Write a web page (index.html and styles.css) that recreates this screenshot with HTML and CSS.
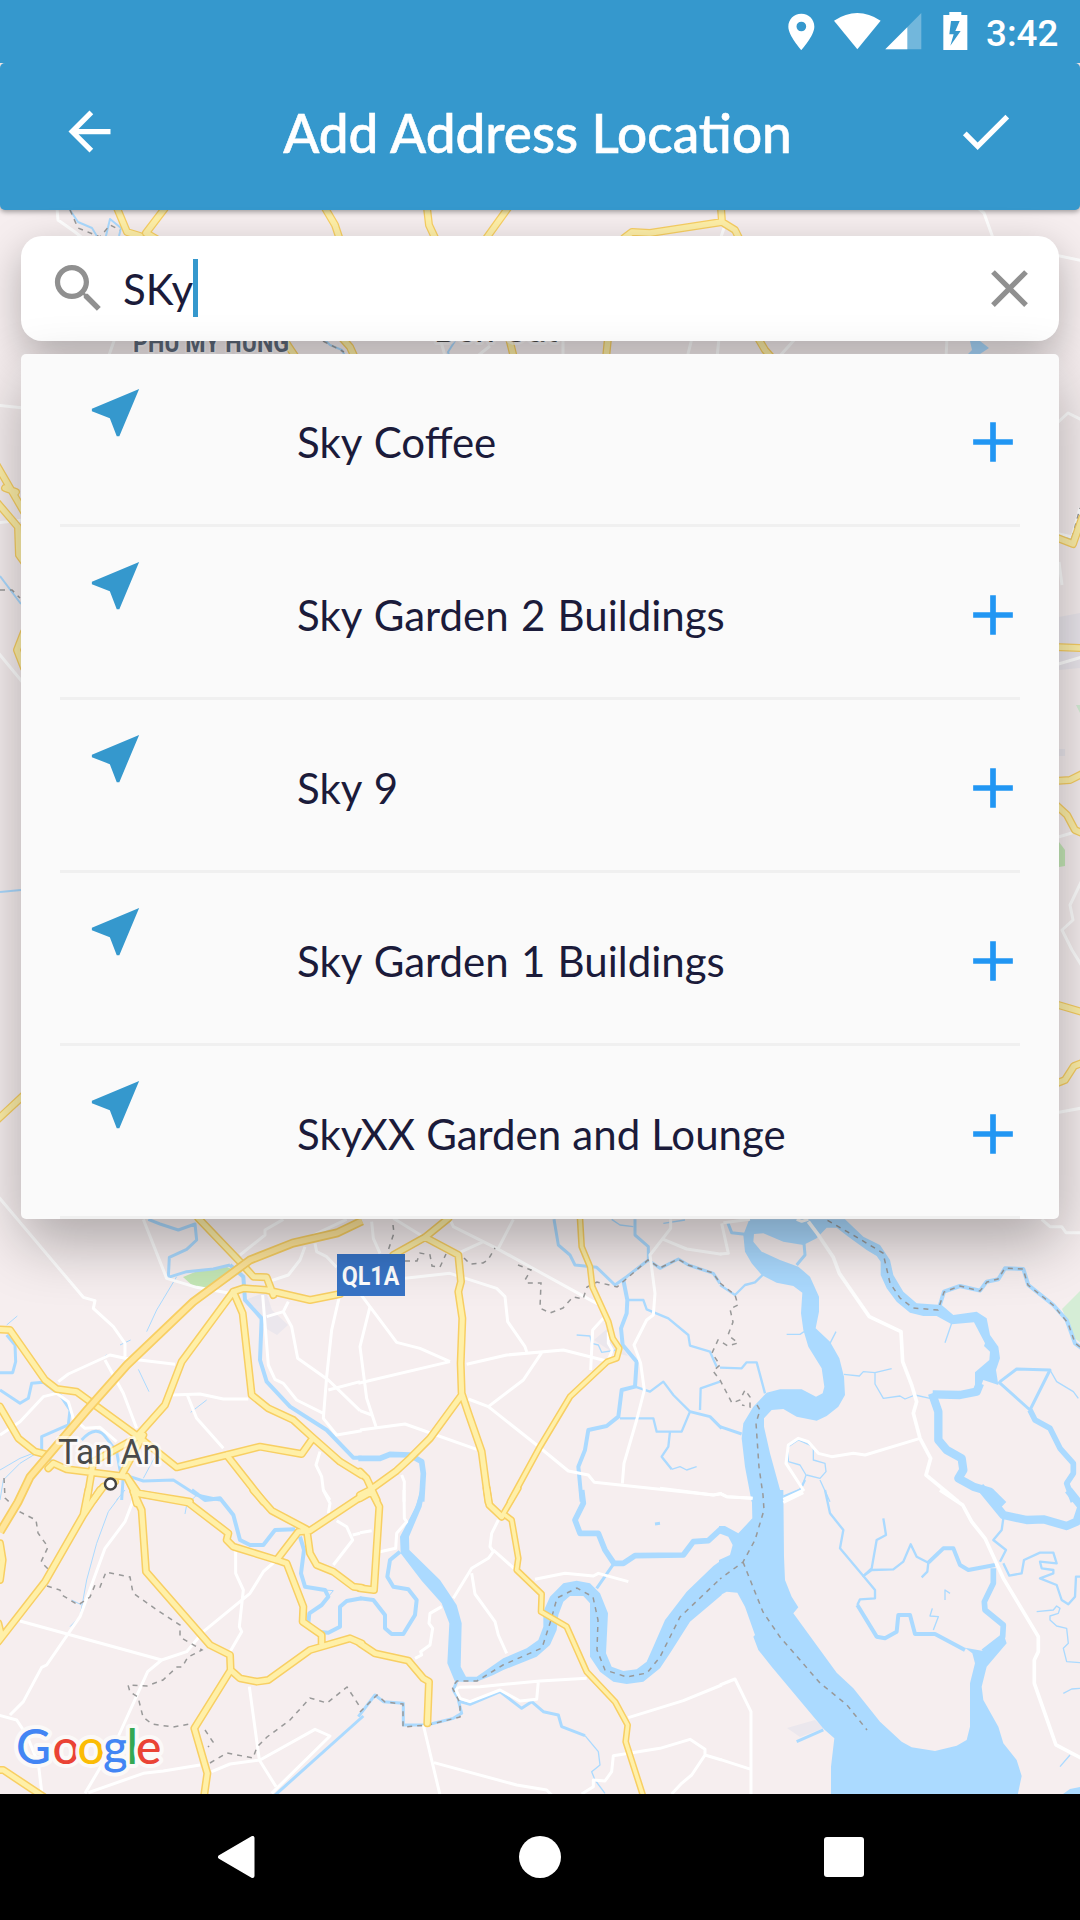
FILE: index.html
```html
<!DOCTYPE html>
<html lang="en">
<head>
<meta charset="utf-8">
<title>Add Address Location</title>
<link rel="stylesheet" href="styles.css">
</head>
<body>
<div class="screen">
  <svg class="map" viewBox="0 0 1080 1794" width="1080" height="1794" aria-label="Map">
    <defs>
      <g id="arterials">
        <g class="edge-roads">
          <path d="M117 208 127 232 140 236M165 208 146 233 158 240M325 208 335 225 340 240M427 208 429 225 436 240M508 208 485 240M721 208 722 222 650 233 632 232 624 238M722 222 735 230 740 240"/>
          <path d="M283 338 295 356M342 338 350 347 355 358M509 338 514 358M608 338 606 358M758 338 765 350 772 358"/>
          <path d="M-5 462 24 512M5 488 16 492M-5 500 18 527 19 555 24 562M24 632 17 650 24 668M-5 1122 24 1095"/>
          <path d="M1055 537 1073 544 1082 518M1055 647 1082 648M1055 781 1070 780 1082 774M1055 804 1067 815 1075 830 1082 833M1055 1004 1082 1012M1055 1084 1065 1080 1074 1066 1082 1063"/>
        </g>
        <g class="tile" transform="translate(0 1180) scale(.33333)">
          <path d="M595 115 720 245 760 290 800 292 820 345M700 335 730 325 800 330 930 360 1020 342M700 335 545 545 495 675 415 765M700 335 728 400 755 645 805 685 880 720 935 770 1020 845 1085 885M-5 448 30 450 135 600 170 627 230 635 415 770 530 862 680 825 780 800 905 822 938 775M680 825 790 965"/>
          <path d="M0 680 55 775 105 815 145 825M145 865 160 850 200 868 380 890 415 940 570 965M415 770 280 845 260 965M430 765 365 885M280 960 310 920 345 905M380 890 400 930 410 970"/>
        </g>
        <g class="tile" transform="translate(360 1180) scale(.33333)">
          <path d="M265 115 195 172 100 225M195 172 295 225 303 305 295 335 307 415 302 550 305 640 325 700 365 815 385 965M305 645 210 775 150 835 110 872 30 930 0 945M0 875 20 895 50 960"/>
          <path class="narrow" d="M660 115 665 200 690 260 697 320 745 425 758 475 778 505 770 535 742 545 630 650 540 800 450 965"/>
        </g>
        <g class="tile" transform="translate(0 1490) scale(.33333)">
          <path d="M410 10 565 38 685 130 680 150 700 170 830 210 860 220 910 350 908 395 965 435 965 460M830 210 895 125 930 122 1080 22M760 0 815 62 920 118 930 190 950 225 1000 245 1060 290 1085 293M400 5 425 60 438 245 630 465 690 495 692 545M692 540 720 565 770 575 805 570 930 480 1050 445 1085 460M692 540 583 715 622 850 612 920"/>
          <path d="M-5 455 135 275 250 75 265 0M250 75 300 0M-5 840 10 840 130 920M0 160 8 210 0 270M-5 400 5 440"/>
        </g>
        <g class="tile" transform="translate(360 1490) scale(.33333)">
          <path d="M380-5 388 45 425 80M0 25 35 5 58 50 42 300 0 295M0 460 45 490 145 512 190 565 207 575 202 700"/>
          <path class="narrow" d="M475-5 425 80M435 75 455 90 475 205 470 240 545 312 543 365 620 410 680 545 765 635 803 705 797 755 850 920"/>
        </g>
      </g>
      <g id="highway">
        <path d="M362 1221 337 1233 293 1243 250 1260 193 1302 127 1365 87 1410 30 1477 18 1502 0 1532" />
      </g>
    </defs>
    <rect class="land" width="1080" height="1794"/>

    <path class="park" d="M183 1277 200 1270 227 1267 238 1272 230 1280 213 1291 193 1286z"/>
    <path class="reserve" d="M1062 1309 1081 1290V1343L1073 1337 1068 1323z"/>
    <path class="park" d="M1059 842 1065 850V866L1059 867z"/>
    <path class="reserve" d="M1076 705h4v8z"/>
    <path class="town" d="M1059 617 1080 613V668L1059 670zM1059 749h6v7h-6z"/>
    <path class="town" d="M245 1300 266 1292 272 1310 288 1325 277 1335 265 1328zM594 1340 608 1328 628 1356 612 1352zM787 1728 815 1720 824 1728 800 1737z"/>

    <g class="water">
      <path class="w3" d="M70 210 78 222 92 228 98 238M105 240 110 219 121 228 119 236M323 338 330 345 342 350 346 358M450 358 448 352 455 341M0 576 21 604M0 892 21 890M1059 536 1074 539"/>
      <path class="lake" d="M970 341H980L989 348 980 354H968L972 350z"/>
      <g transform="translate(0 1180) scale(.33333)">
        <path class="w12" d="M690 255 730 290 735 360 785 415 780 540 800 605 870 680 980 750 1060 833 1085 833"/>
        <path class="w9" d="M445 118 480 132 535 150 585 132 590 180 560 208 508 232 505 292 560 275 640 267 690 255M-5 578 38 578 47 545 45 495 20 465M0 630 60 670 85 655 95 610 130 607 180 645 210 690 205 735 125 770 125 815 165 855M245 780Q290 730 320 775L350 815 360 870 390 890 430 903 520 900 590 945 660 960M370 885 365 960"/>
        <path class="w4" d="M530 290 470 390 440 455M20 435 52 408M360 495 392 480M300 540 320 525M415 568 447 635M572 697 620 660M125 810 60 835 0 870M0 960 10 900 60 850 125 810M430 895 465 830"/>
      </g>
      <g transform="translate(360 1180) scale(.33333)">
        <path class="w17" d="M-5 835 60 835 90 823 150 825 185 845 190 880 185 965"/>
        <path class="w9" d="M582 118 595 195 630 225 645 255 710 262 765 315 800 290 865 240 865 200 825 165 825 118M865 240 900 265 955 237 985 255 1060 280 1080 310M990 695 1050 710 1085 745"/>
        <path class="w12" d="M790 300 802 360 800 400 783 445 788 495 830 545 825 620 785 630 775 710 740 738 685 750 675 810 655 860 665 965"/>
        <path class="w7" d="M800 360 850 360 860 388 925 415 985 465 990 497 1050 515 1070 560M825 620 870 635 910 605 940 645 990 695M1020 690 1022 625 1080 605M990 695 965 755 890 755 880 715 780 715M930 755 925 800 905 830 935 868"/>
        <path class="w5" d="M935 868 960 860 980 870 1010 860M650 465 690 468 695 490 715 495 725 517 770 510M755 118 780 135 820 140M910 130 975 120"/>
      </g>
      <g transform="translate(720 1180) scale(.33333)">
        <path class="lake" d="M88 118 70 165 75 215 95 250 125 285 170 308 220 318 247 338 243 400 250 450 265 500 305 565 313 620 308 640 288 650 245 628 180 628 140 638 100 680 70 730 65 775 75 860 95 965H190L150 820 132 740V715L155 690 190 687 230 710 290 722 320 708 355 680 375 645 372 590 358 535 330 485 287 445 297 395V350L270 290 235 260 180 240 125 215 100 185 102 162 130 160 190 185 250 195 290 175 320 143H350L385 170 440 210 470 228 482 245V285L500 325 530 365 570 398 610 408H650L695 433 762 427 795 490 792 498 810 515 808 540 765 577V620L778 630 790 600 835 615 828 570 840 535 835 500 810 465 800 415 770 395 700 405 665 375 590 370 550 335 520 285 510 240 480 195 430 170 375 118z"/>
        <path class="w26" d="M780 610 770 635 720 645 638 643"/>
        <path class="w26" d="M636 640 655 695 655 780 680 810 725 835 730 870 715 895 760 920 810 935 850 975"/>
        <path class="w12" d="M655 390 672 335 720 318 780 332 800 305 835 298 855 265 910 267 925 315 1000 375 1040 420 1065 490 1085 505"/>
        <path class="w9" d="M840 605 890 567 990 570 930 690 835 605M22 125 35 158 75 163M252 190 255 225 230 255M0 740 65 762"/>
        <path class="w17" d="M930 690 945 720 990 745 1020 805 1060 850V880L1040 910 1060 965"/>
        <path class="w5" d="M990 570 1010 605 1060 635 1075 655M695 430 675 488M372 583 418 588 430 575 465 578 515 566M465 578V612L490 655 540 648 555 657 585 645 630 655M330 490 348 455M200 463H240L252 455M205 845 240 855 258 885 245 925 190 955M205 845V800L235 780 280 800V840L315 850 318 875 300 895 260 885M300 900 330 965"/>
        <path class="w7" d="M130 283 105 307 75 315 45 345 0 315M0 563 65 565 80 547H110L135 640M255 900 240 930 190 955"/>
      </g>
      <g transform="translate(0 1490) scale(.33333)">
        <path class="w12" d="M575 0 615 30 660 25 700 75 720 150 750 165H790L825 120 885 118M900 140 912 180 903 250 915 290 975 300 985 320 965 345 928 370 925 400 950 425 985 428 1020 410V350L1040 333 1085 325"/>
        <path class="w4" d="M355 25 325 65 290 160 260 270 240 380 210 410M595 10 560 45 555 72M975 300 1000 302 985 320M375 0 350 30M215 330 245 345"/>
        <path class="w9" d="M820 920 1090 678"/>
      </g>
      <g transform="translate(360 1490) scale(.33333)">
        <path class="w12" d="M188-5 175 45 135 135"/>
        <path class="lake" d="M183 0 165 55 120 140 122 190 185 272 245 340 268 400 262 520 285 575H350L400 555 430 540 530 500 570 465 590 420 595 375 610 335 630 318H670L690 340V500L720 545 760 575 800 582 850 575 900 535 930 490 990 395 1085 315V210L1060 228 980 305 915 390 880 470 860 515 830 538 790 543 755 530 738 490 744 370 720 310 690 280 650 272 610 280 570 320 550 365V410L535 450 500 475 430 505 350 560H318L302 530 305 400 290 345 240 270 148 180 147 140 185 50 195 0z"/>
        <path class="w12" d="M120 185 90 210 82 260 100 290 145 298 170 330 165 375 130 432H95L75 415V375L40 330 0 325"/>
        <path class="w17" d="M665 0 670 40 645 90 660 130H715L735 180 762 220H790L825 197 970 195 1000 155 1045 152 1085 115"/>
        <path class="w9" d="M762 220 710 295M290 575 280 600 300 635 330 643 420 605 485 655 515 635 550 665 595 675 605 710 675 737M-5 680 45 615 70 635 130 640V705H200L280 685 305 670 295 630M885 102 900 100"/>
        <path class="w5" d="M675 737 715 785 720 825 695 845 705 870 735 910"/>
      </g>
      <g transform="translate(720 1490) scale(.33333)">
        <path class="lake" d="M95 0 97 85 55 130 15 108H-3V130L25 140 38 165 30 195-3 210V317L20 305 52 308 75 350 105 435 100 440 115 480 155 530 312 718 343 745 333 830V915H893L905 858 890 810 850 760 835 710 790 630 785 590 800 530 860 460 850 430 790 483 735 473 757 490 765 520 750 580V710L740 750 710 767 645 783 575 772 545 755 480 695 400 595 350 548 220 370 235 352 215 320 195 270 192 200 190 0z"/>
        <path class="w17" d="M790 485 848 440 850 405 795 360 793 335 820 280 820 235"/>
        <path class="w12" d="M825 225 745 240 720 225 700 175H670L625 218M412 345 470 440 495 445 530 425 535 375H570L585 432H645L735 480"/>
        <path class="w8" d="M625 218 590 200 572 163 550 215 520 238 455 240 430 258 465 300V325L420 328 412 345"/>
        <path class="w8" d="M315 0 330 70 370 120 360 175 430 258 455 235 470 150 498 135 490 85M625 218 622 245 605 262M850 85 845 120 820 150 858 180 840 215M190 20 250-5"/>
        <path class="w26" d="M780-10 850 75 920 90 970 88 1040 108 1070 95 1085 50 1045 0"/>
        <path class="w8" d="M850 220 868 257 905 250 912 210 960 188H1000L1010 220 960 215 965 235 1000 240V250L960 265 1010 285 1025 330 1045 343 1065 320 1068 260H1085"/>
        <path class="w5" d="M950 365 1000 360 1010 348 1020 355 1015 370 990 378V390L1010 408 1040 415 1045 460 1030 475 1040 515 1080 518M1030 610 1055 597 1080 595M1020 830 1050 795M640 420 655 380 630 378 637 355M675 330V300L690 310"/>
        <path class="w9" d="M230 755 310 720"/>
        <path class="lake" d="M1025 915 1050 897 1085 890V915z"/>
      </g>
    </g>

    <g class="streets">
      <g class="edge-roads">
        <path d="M57 208 58 220 75 232 85 240M720 240 724 228M978 208 984 213 993 238M1055 255 1084 261M115 338 108 358M440 338 445 356M475 358 490 346M563 338V358M692 338 687 358M719 338 717 358M796 338 778 358M947 338 946 358M-4 405 24 408M-4 523 24 520M-4 650 24 684M1055 425 1068 413 1082 420M1082 880 1070 905 1073 920 1062 930 1072 950 1082 966M1055 838 1075 832M1055 1113 1082 1108M1059 562 1062 585M1055 533 1072 537 1080 508M1055 665 1082 657"/>
      </g>
      <g transform="translate(0 1180) scale(.33333)">
        <path d="M-5 50 250 352 285 362 280 385 340 440 375 490V530M430 118 500 295 590 322 690 340M175 605 205 582 330 525 375 535 525 553M315 540 370 640 410 745M0 765 60 725 130 650 170 640 205 665 220 715 255 745 300 742 350 785M515 645 600 642 670 657H745M562 645 590 715 670 805M850 118 795 150V165L720 225M1040 118 940 165M915 200 900 240 865 285 805 305M945 190 950 215 980 230 1010 262M788 345 805 555 825 598 850 610 890 660 970 700M865 365 850 395 800 410M850 395 875 440 893 535 985 600 1080 692M1018 350 995 450 980 590 970 715 1010 765 1085 752M985 630 1080 605M960 815 948 855 965 890 970 930 990 960"/>
      </g>
      <g transform="translate(360 1180) scale(.33333)">
        <path d="M35 125 40 175 60 220M100 115 190 170M270 118 280 140 370 185 410 205 700 365 730 380M370 185 300 217M415 205 460 118M135 295 270 280 410 325 435 350 443 425 495 500 500 515M0 340 110 487 180 505 270 545M-5 610 270 545M30 380 0 500 20 655 48 740M0 750 135 732 350 808M0 692 35 705M320 553 440 525 610 510 740 543M545 518 490 600 385 680 325 657M385 680 530 795 625 873 685 885 703 907 1060 945 1085 940M730 415 698 450 692 570M745 455V490L757 510 745 540M932 118V145L870 225 885 340 880 405 860 420 822 495 842 550 853 630 830 720 792 850 787 910M910 178 980 207 1085 223M125 885 133 905 132 965"/>
      </g>
      <g transform="translate(720 1180) scale(.33333)">
        <path class="major" d="M265 125 293 162 340 232 358 280 448 410 543 455 548 545 575 615 590 665 580 700 600 775 632 835 618 885 715 965"/>
        <path d="M600 775 435 825 400 820 335 830 295 820 265 785 235 775 205 795 198 850 250 930 190 958M5 130 25 220 0 222M0 940 20 950 98 955M965 118 990 140H1025L1038 158H1080M10 128 90 118M230 118 245 124 265 118"/>
      </g>
      <g transform="translate(0 1490) scale(.33333)">
        <path d="M400 30 375 95 315 175 240 380 140 525 125 532 70 635 30 675M-5 675 50 690 80 735 115 820 125 905M60 393 485 510 560 485 610 425 750 310 790 245 830 210M485 510 443 545 350 750 255 910M265 908 430 850 490 843 600 825M635 845 690 822 780 810 945 718 990 738 815 910M748 590 778 810 828 890M707 180V250L730 300 718 410 725 425 690 485M970 0 990 40 985 70M1010 92 1040 110 1058 150 1000 225M1058 135 1080 130"/>
      </g>
      <g transform="translate(360 1490) scale(.33333)">
        <path d="M132 0 133 85 140 95 110 130 107 175 60 185M0 128 35 122M415 90 395 130 390 170 400 185 385 205 335 235 280 325M400 180 465 238M335 250 345 312 405 395 415 435 440 490M245 350 210 370 207 400 218 415 210 465 182 485 185 495 165 505M525 268 615 250 700 258 715 250 805 275M295 592 360 590 540 573 680 565M535 575 530 628 480 633 420 600 330 635 300 625 288 600 295 592M190 705 240 915M222 818 470 885 560 900 575 915M805 683 970 632 1085 585M665 912 700 890V870L735 873 755 845 760 797 900 775 990 748 1035 778V795L995 855 965 880 935 912M1035 795 1085 810M900-5 1060 15 1080 12"/>
      </g>
      <g transform="translate(720 1490) scale(.33333)">
        <path class="major" d="M660 0 728 45 755 95 795 145 850 265 955 440V485L943 510V580L1008 765 1085 805"/>
        <path d="M0 585 45 567 93 665V915M0 808 93 838M0 10 20 20 97 25M190 37 250 8"/>
      </g>
    </g>

    <g class="borders">
      <path d="M70 210 78 228 100 237 110 225 120 230M323 341 344 352M0 590 12 590 20 598M1072 538 1080 508"/>
      <path d="M393 1225 394 1233 388 1251M405 1261 417 1261 420 1253 430 1255 432 1266 440 1267 446 1254M464 1258 470 1264 483 1263 488 1260 495 1248M518 1265 531 1270 525 1280 527 1283 541 1283 540 1308 550 1313 563 1308 573 1297 583 1299 587 1287 597 1282 617 1287 648 1260 660 1268 678 1259 688 1265 713 1273 720 1283M1080 1347 1075 1343 1068 1323 1053 1305 1028 1285 1023 1269 1005 1268 998 1279 987 1282 980 1291 960 1286 944 1292 938 1310 913 1308 900 1298 890 1283 883 1253 853 1235 825 1219"/>
      <path d="M720 1283 735 1295 738 1305 730 1309 733 1322 728 1335 738 1343 728 1346 718 1340 712 1353 720 1365 713 1371 720 1380 732 1403 740 1400 745 1390 750 1397V1407L742 1405M757 1405 760 1410 756 1423 759 1467 763 1495 764 1510 755 1540 743 1562 720 1579M743 1562 763 1612 780 1637 820 1683 847 1705 867 1730"/>
      <path d="M4 1478 5 1498 20 1512 36 1520 38 1533 48 1547 41 1562 48 1569M47 1586 60 1590 62 1595 78 1605 90 1597 95 1585 100 1587 106 1572 130 1577 133 1593 157 1610 180 1625V1637L202 1650 188 1657 182 1667H177L163 1680 147 1686 128 1685 130 1692 138 1697 143 1717 152 1724 173 1727 190 1724M205 1730 213 1742 208 1747M210 1763 227 1753 253 1758 257 1747 267 1737 290 1720 310 1698 327 1703 347 1687 360 1707"/>
      <path d="M360 1712 377 1695 385 1702 403 1704V1727L428 1725 460 1717V1703L452 1687 457 1681H477L503 1665 542 1648 551 1620 557 1598 577 1588 593 1597 598 1620 597 1650 605 1670 627 1677 647 1673 660 1657 680 1617 720 1579"/>
    </g>

    <use href="#arterials" class="road-case"/>
    <use href="#arterials" class="road-fill"/>
    <use href="#highway" class="highway-case"/>
    <use href="#highway" class="highway-fill"/>

    <rect class="shield" x="337" y="1254" width="68" height="42"/>
    <text class="shield-label" x="370.500" y="1285" text-anchor="middle" textLength="57.500" lengthAdjust="spacingAndGlyphs">QL1A</text>
    <circle class="town-dot" cx="110.500" cy="1484" r="5.500"/>
    <text class="place" x="58" y="1463.500" textLength="103" lengthAdjust="spacingAndGlyphs">Tan An</text>
    <text class="place" x="434" y="342" textLength="124" lengthAdjust="spacingAndGlyphs">Ben Cat</text>
    <text class="district" x="133" y="352" textLength="156" lengthAdjust="spacingAndGlyphs">PHU MY HUNG</text>
    <text class="google" y="1763.500"><tspan class="g-blue" x="16">G</tspan><tspan class="g-red" x="52.500">o</tspan><tspan class="g-yellow" x="77.500">o</tspan><tspan class="g-blue" x="103">g</tspan><tspan class="g-green" x="126.500">l</tspan><tspan class="g-red" x="136">e</tspan></text>
  </svg>

  <div class="status-bar">
    <svg class="status-icons" viewBox="0 0 598 189" width="199.330" height="63" aria-hidden="true">
      <path fill-rule="evenodd" d="M43 41C20 41 4 58 4 80C4 107 43 150 43 150S82 107 82 80C82 58 66 41 43 41ZM43 65A14.500 14.500 0 1 1 43 94 14.500 14.500 0 1 1 43 65Z"/>
      <path d="M141 62Q211 16 281 62L211 148Z"/>
      <path fill-opacity=".3" d="M403 39V148H295Z"/>
      <path d="M361 82V148H295Z"/>
      <path fill-rule="evenodd" d="M469 45H487V36H523V45H541V150H469ZM492 63L487 103H500L490 137 521 93H505L518 63Z"/>
    </svg>
    <span class="clock">3:42</span>
  </div>

  <header class="app-bar">
    <svg class="icon" viewBox="0 0 24 24" aria-label="Back"><path d="M20 11H7.830l5.590-5.590L12 4l-8 8 8 8 1.410-1.410L7.830 13H20v-2z"/></svg>
    <h1>Add Address Location</h1>
    <svg class="icon" viewBox="0 0 24 24" aria-label="Confirm"><path d="M9 16.170L4.830 12l-1.420 1.410L9 19 21 7l-1.410-1.410z"/></svg>
  </header>

  <main>
    <div class="search">
      <svg class="icon" viewBox="0 0 24 24" aria-hidden="true"><path d="M15.500 14h-.79l-.28-.27C15.410 12.590 16 11.110 16 9.500 16 5.910 13.090 3 9.500 3S3 5.910 3 9.500 5.910 16 9.500 16c1.610 0 3.090-.59 4.230-1.570l.27.28v.79l5 4.990L20.490 19l-4.990-5zm-6 0C7.010 14 5 11.990 5 9.500S7.010 5 9.500 5 14 7.010 14 9.500 11.990 14 9.500 14z"/></svg>
      <span class="query">SKy</span><span class="caret"></span>
      <svg class="icon clear" viewBox="0 0 24 24" aria-label="Clear"><path d="M19 6.410L17.590 5 12 10.590 6.410 5 5 6.410 10.590 12 5 17.590 6.410 19 12 13.410 17.590 19 19 17.590 13.410 12z"/></svg>
    </div>
    <ul class="results">
      <li><svg class="near" viewBox="0 0 24 24"><path d="M21 3L3 10.530v.98l6.840 2.650L12.480 21h.98L21 3z"/></svg><span>Sky Coffee</span><svg class="add" viewBox="0 0 24 24"><path d="M19 13h-6v6h-2v-6H5v-2h6V5h2v6h6v2z"/></svg></li>
      <li><svg class="near" viewBox="0 0 24 24"><path d="M21 3L3 10.530v.98l6.840 2.650L12.480 21h.98L21 3z"/></svg><span>Sky Garden 2 Buildings</span><svg class="add" viewBox="0 0 24 24"><path d="M19 13h-6v6h-2v-6H5v-2h6V5h2v6h6v2z"/></svg></li>
      <li><svg class="near" viewBox="0 0 24 24"><path d="M21 3L3 10.530v.98l6.840 2.650L12.480 21h.98L21 3z"/></svg><span>Sky 9</span><svg class="add" viewBox="0 0 24 24"><path d="M19 13h-6v6h-2v-6H5v-2h6V5h2v6h6v2z"/></svg></li>
      <li><svg class="near" viewBox="0 0 24 24"><path d="M21 3L3 10.530v.98l6.840 2.650L12.480 21h.98L21 3z"/></svg><span>Sky Garden 1 Buildings</span><svg class="add" viewBox="0 0 24 24"><path d="M19 13h-6v6h-2v-6H5v-2h6V5h2v6h6v2z"/></svg></li>
      <li><svg class="near" viewBox="0 0 24 24"><path d="M21 3L3 10.530v.98l6.840 2.650L12.480 21h.98L21 3z"/></svg><span class="tight">SkyXX Garden and Lounge</span><svg class="add" viewBox="0 0 24 24"><path d="M19 13h-6v6h-2v-6H5v-2h6V5h2v6h6v2z"/></svg></li>
    </ul>
  </main>

  <nav class="nav-bar">
    <svg viewBox="0 0 42 42"><path d="M37.500 2V40L5 21Z" stroke="#fff" stroke-width="4" stroke-linejoin="round"/></svg>
    <svg viewBox="0 0 42 42"><circle cx="21" cy="21" r="21"/></svg>
    <svg viewBox="0 0 42 42"><rect x="1" y="1" width="40" height="40" rx="3"/></svg>
  </nav>
</div>
</body>
</html>
```
FILE: styles.css
```css
* { box-sizing: border-box; }
body { margin: 0; background: #000; font-family: Lato, "Liberation Sans", sans-serif; }
.screen { position: relative; width: 1080px; height: 1920px; overflow: hidden; display: flex; flex-direction: column; }

/* Map underlay */
.map { position: absolute; top: 0; left: 0; display: block; }
.map path { fill: none; }
.map .land { fill: #f6eeef; }
.map .park { fill: #c5e8b7; }
.map .reserve { fill: #d5edd6; }
.map .town { fill: #ebe7ed; }
.water path { stroke: #abdaff; stroke-linejoin: round; }
.water .lake { fill: #abdaff; stroke: none; }
.w3 { stroke-width: 2px; }
.w4 { stroke-width: 3px; }
.w5 { stroke-width: 4px; }
.w7 { stroke-width: 7px; }
.w8 { stroke-width: 7px; }
.w9 { stroke-width: 9px; }
.w12 { stroke-width: 12px; }
.w17 { stroke-width: 17px; }
.w26 { stroke-width: 25px; }
.streets path { stroke: #fff; stroke-width: 9px; stroke-linejoin: round; }
.streets .major { stroke-width: 11px; }
.streets .edge-roads path { stroke-width: 3px; }
.borders path { stroke: #999; stroke-width: 1.5px; stroke-dasharray: 5 5; }
.road-case { --wide: 24px; --slim: 20px; --edge: 8px; stroke: #f8cf63; }
.road-fill { --wide: 15px; --slim: 11px; --edge: 5.500px; stroke: #fff0a8; }
#arterials path { stroke-width: var(--wide); stroke-linejoin: round; stroke-linecap: round; }
#arterials .narrow { stroke-width: var(--slim); }
#arterials .edge-roads path { stroke-width: var(--edge); }
.highway-case { stroke: #f8cf63; stroke-width: 9px; }
.highway-fill { stroke: #ffe69b; stroke-width: 5.500px; }
.shield { fill: #3874c6; }
.shield-label { font: 700 25px Roboto, sans-serif; fill: #fff; }
.town-dot { fill: #fff; stroke: #444; stroke-width: 2.500px; }
.place { font: 400 35px Roboto, sans-serif; fill: #4a4a4a; stroke: rgba(255, 255, 255, .65); stroke-width: 6px; paint-order: stroke; stroke-linejoin: round; }
.district { font: 700 27px Roboto, sans-serif; fill: #5f6b7c; stroke: rgba(255, 255, 255, .5); stroke-width: 4px; paint-order: stroke; }
.google { font: 500 48px Lato, sans-serif; stroke: rgba(252, 250, 249, .95); stroke-width: 8px; paint-order: stroke; stroke-linejoin: round; }
.g-blue { fill: #4285f4; }
.g-red { fill: #ea4335; }
.g-yellow { fill: #fbbc05; }
.g-green { fill: #34a853; }

/* System status */
.status-bar { position: relative; z-index: 1; height: 63px; flex: none; background: #3598cd; display: flex; justify-content: flex-end; align-items: center; padding-right: 21px; }
.status-icons { fill: #fff; }
.clock { font: 500 36.750px/52px Roboto, sans-serif; color: #fff; width: 73px; margin-top: 4px; }

.app-bar { position: relative; height: 147px; flex: none; background: #3598cd; border-radius: 5px; box-shadow: 0 2px 5px rgba(0, 0, 0, .35); display: flex; align-items: center; justify-content: space-between; padding: 0 63px 10px 58px; }
.app-bar h1 { margin: 0; color: #fff; font-size: 53.100px; font-weight: 500; line-height: 64px; padding-top: 2px; -webkit-text-stroke: .6px #fff; }
.icon { width: 63px; height: 63px; fill: #fff; flex: none; }

main { position: relative; flex: 1; padding: 26px 21px 0; }
.search { height: 105px; background: #fff; border-radius: 21px; box-shadow: 0 14px 40px rgba(0, 0, 0, .28); display: flex; align-items: center; padding: 0 18px 0 26px; color: #1b1b3a; }
.search .icon { fill: #909090; }
.query { font-size: 42px; line-height: 52px; margin-left: 13px; margin-top: 1px; }
.caret { width: 5px; height: 58px; margin-bottom: 1px; background: #3598cd; }
.clear { margin-left: auto; }
.results { position: relative; list-style: none; margin: 13px 0 0; padding: 0 39px; background: #fafafa; border-radius: 5px; box-shadow: 0 24px 60px rgba(0, 0, 0, .3); }
.results li { height: 173px; border-bottom: 3px solid #f0f0f0; display: grid; grid-template-columns: 237px 1fr 68px; align-items: center; color: #1b1b3a; font-size: 42px; line-height: 52px; padding-top: 6px; word-spacing: 1.5px; }
.results .tight { word-spacing: .4px; }
.near { width: 63px; height: 63px; margin: 21px 0 0 24px; align-self: start; fill: #3598cd; }
.add { width: 68px; height: 68px; fill: #2196f3; position: relative; left: 7px; }

.nav-bar { position: relative; height: 126px; flex: none; background: #000; display: flex; align-items: center; justify-content: space-between; padding: 0 215px; }
.nav-bar svg { width: 42px; height: 42px; fill: #fff; }
```
